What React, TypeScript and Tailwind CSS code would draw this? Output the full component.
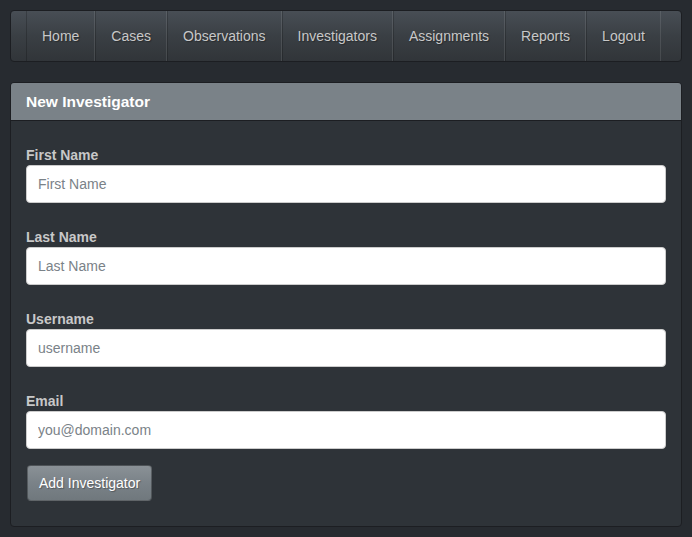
import React from "react";

const navItems = ["Home", "Cases", "Observations", "Investigators", "Assignments", "Reports", "Logout"];

const fields: Array<{ label: string; placeholder: string; type: string }> = [
    { label: "First Name", placeholder: "First Name", type: "text" },
    { label: "Last Name", placeholder: "Last Name", type: "text" },
    { label: "Username", placeholder: "username", type: "text" },
    { label: "Email", placeholder: "you@domain.com", type: "email" },
];

const App: React.FC = () => {
    return (
        <div className="min-h-screen bg-[#272b30] px-[10px] pt-[10px] pb-[10px] font-['Liberation_Sans',Arial,sans-serif] text-[14px]">
            {/* navbar */}
            <nav className="h-[52px] rounded-[4px] border border-[#1c1e22] bg-gradient-to-b from-[#484e55] via-[#3a3f44] to-[#313539] pl-[15px]">
                <ul className="flex h-full">
                    {navItems.map((item) => (
                        <li key={item} className="h-full">
                            <a
                                href="#"
                                className="flex h-full items-center border-l border-r border-l-black/20 border-r-white/10 px-[15px] text-[#c8c8c8] [text-shadow:1px_1px_1px_rgba(0,0,0,0.3)] hover:text-white"
                            >
                                {item}
                            </a>
                        </li>
                    ))}
                </ul>
            </nav>

            {/* panel */}
            <div className="mt-[20px] overflow-hidden rounded-[4px] border border-[#1c1e22] bg-[#2e3338]">
                <div className="flex h-[38px] items-center border-b border-[#1c1e22] bg-[#7a8288] px-[15px]">
                    <h3 className="text-[15.5px] font-bold text-white">New Investigator</h3>
                </div>
                <form className="px-[15px] pt-[24px] pb-[25px]" onSubmit={(e) => e.preventDefault()}>
                    {fields.map((f, i) => (
                        <div key={f.label} className={i === fields.length - 1 ? "mb-[16px]" : "mb-[24px]"}>
                            <label className="block leading-5 font-bold text-[#c8c8c8]">{f.label}</label>
                            <input
                                type={f.type}
                                placeholder={f.placeholder}
                                className="block h-[38px] w-full rounded-[4px] border border-[#cccccc] bg-white pl-[11px] pr-3 text-[14px] text-[#272b30] placeholder:text-[#7a8288] focus:outline-none"
                            />
                        </div>
                    ))}
                    <button
                        type="submit"
                        className="ml-px h-[36px] rounded-[4px] border border-black/30 bg-gradient-to-b from-[#8a9196] via-[#7a8288] to-[#70787d] px-[11px] text-white [text-shadow:1px_1px_1px_rgba(0,0,0,0.3)]"
                    >
                        Add Investigator
                    </button>
                </form>
            </div>
        </div>
    );
};

export default App;
